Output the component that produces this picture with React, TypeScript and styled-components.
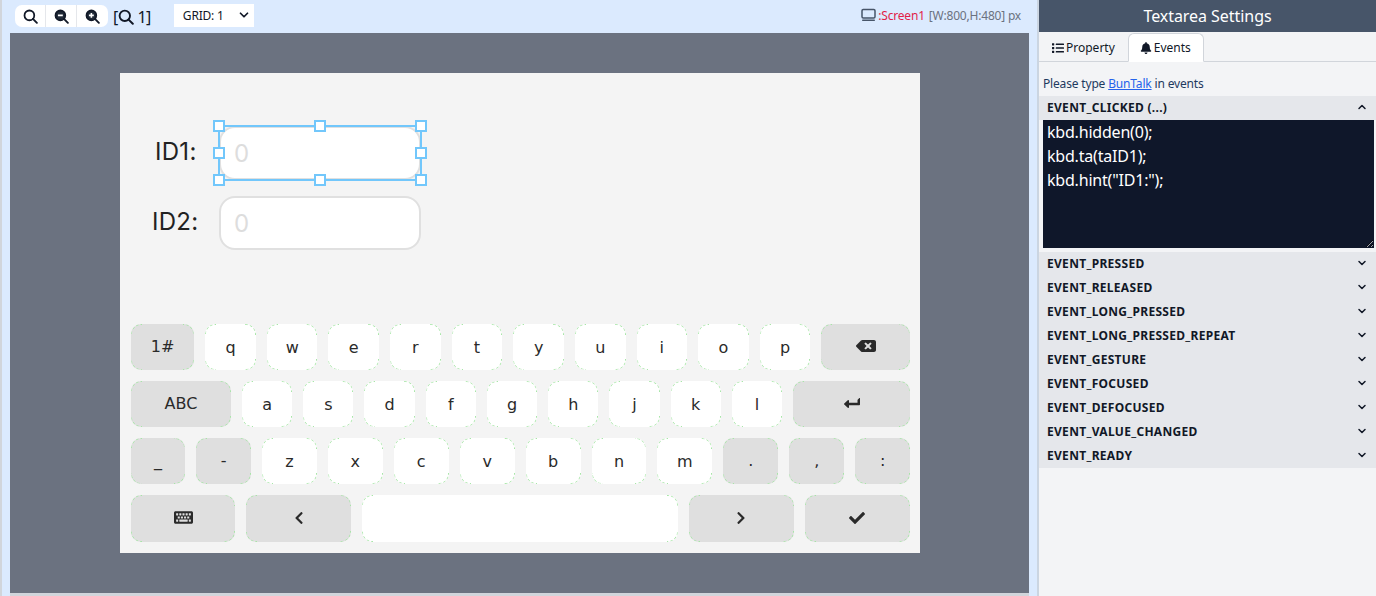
import styled, { createGlobalStyle } from 'styled-components';
import {
  FaBackspace,
  FaBell,
  FaCheck,
  FaChevronLeft,
  FaChevronRight,
  FaKeyboard,
  FaLevelDownAlt,
  FaList,
} from 'react-icons/fa';
import { ChevronDown, ChevronUp } from 'lucide-react';

const GlobalStyle = createGlobalStyle`
  html, body {
    margin: 0;
    padding: 0;
    height: 100%;
    overflow: hidden;
    font-family: "Noto Sans", "Open Sans", sans-serif;
  }
  * {
    box-sizing: border-box;
  }
`;

const Page = styled.div`
  display: flex;
  width: 1376px;
  height: 596px;
`;

const Editor = styled.div`
  flex: 0 0 1039px;
  display: flex;
  flex-direction: column;
  background: #dbeafe;
  border-left: 2px solid #d1d5db;
  border-right: 2px solid #cbd5e1;
  padding-left: 8px;
  padding-right: 8px;
`;

const Toolbar = styled.div`
  flex: 0 0 33px;
  display: flex;
  align-items: center;
  padding-left: 5px;
`;

const ZoomGroup = styled.div`
  display: flex;
  height: 22px;
  margin-top: -1px;
  background: #fff;
  border-radius: 7px;
  overflow: hidden;
`;

const ZoomButton = styled.button`
  width: 31px;
  padding: 0;
  border: 0;
  border-right: 1px solid #e5e7eb;
  background: transparent;
  display: flex;
  align-items: center;
  justify-content: center;
  &:last-child {
    border-right: 0;
  }
`;

const ZoomLevel = styled.div`
  margin-left: 5px;
  display: flex;
  align-items: center;
  font-size: 16px;
  letter-spacing: -0.5px;
  color: #111827;
  white-space: pre;
`;

const GridSelect = styled.div`
  margin-left: 23px;
  margin-top: -3px;
  width: 80px;
  height: 23px;
  padding: 0 3px 0 9px;
  background: #fff;
  display: flex;
  align-items: center;
  justify-content: space-between;
  font-size: 12px;
  letter-spacing: -0.2px;
  color: #111827;
`;

const ScreenInfo = styled.div`
  margin-left: auto;
  margin-right: 8px;
  margin-top: -3px;
  display: flex;
  align-items: center;
  font-size: 12px;
  letter-spacing: -0.2px;
  color: #6b7280;
`;

const ScreenName = styled.span`
  color: #e11d48;
  margin-left: 2px;
  margin-right: 4px;
`;

const Canvas = styled.div`
  flex: 1;
  background: #6b7280;
  padding: 40px 0 0 110px;
  border-bottom: 3px solid #d1d5db;
`;

const Screen = styled.div`
  position: relative;
  width: 800px;
  height: 480px;
  background: #f4f4f4;
  display: flex;
  flex-direction: column;
  justify-content: flex-end;
`;

const FieldLabel = styled.div<{ $x: number; $y: number }>`
  position: absolute;
  left: ${(p) => p.$x}px;
  top: ${(p) => p.$y}px;
  font-family: "Inter", sans-serif;
  font-size: 24px;
  line-height: 30px;
  letter-spacing: 0.3px;
  color: #222;
`;

const FieldBox = styled.div<{ $y: number }>`
  position: absolute;
  left: 99px;
  top: ${(p) => p.$y}px;
  width: 202px;
  height: 54px;
  background: #fff;
  border: 2px solid #e0e0e0;
  border-radius: 16px;
  padding-left: 13px;
  display: flex;
  align-items: center;
  font-family: "Inter", sans-serif;
  font-size: 24px;
  color: #ddd;
`;

const Selection = styled.div`
  position: absolute;
  left: 98px;
  top: 52px;
  width: 204px;
  height: 56px;
  border: 2px solid #72c7fb;
`;

const Handle = styled.div<{ $h: 'l' | 'c' | 'r'; $v: 't' | 'm' | 'b' }>`
  position: absolute;
  width: 12px;
  height: 12px;
  background: #fff;
  border: 2px solid #72c7fb;
  left: ${(p) => (p.$h === 'l' ? '-7px' : p.$h === 'c' ? 'calc(50% - 6px)' : 'calc(100% - 5px)')};
  top: ${(p) => (p.$v === 't' ? '-7px' : p.$v === 'm' ? 'calc(50% - 6px)' : 'calc(100% - 5px)')};
`;

const Keyboard = styled.div`
  height: 240px;
  padding: 11px 10px 11px 11px;
  display: flex;
  flex-direction: column;
  gap: 11px;
`;

const KeyRow = styled.div`
  flex: 0 0 46px;
  display: flex;
  gap: 11px;
  &:last-child {
    flex: 1;
  }
`;

const Key = styled.div<{ $grow: number; $mod?: boolean }>`
  position: relative;
  flex: ${(p) => p.$grow} 1 0;
  min-width: 0;
  display: flex;
  align-items: center;
  justify-content: center;
  padding-bottom: ${(p) => (p.$mod ? '2px' : '0')};
  background: ${(p) => (p.$mod ? '#dfdfdf' : '#fff')};
  border-radius: 10px;
  font-family: "DejaVu Sans", sans-serif;
  font-size: 16px;
  color: #2a2a2a;
  &::after {
    content: '';
    position: absolute;
    inset: 0;
    border: 1px dashed #a8e6a8;
    border-radius: 10px;
    -webkit-mask:
      linear-gradient(#000 0 0) top left / 11px 11px no-repeat,
      linear-gradient(#000 0 0) top right / 11px 11px no-repeat,
      linear-gradient(#000 0 0) bottom left / 11px 11px no-repeat,
      linear-gradient(#000 0 0) bottom right / 11px 11px no-repeat;
    mask:
      linear-gradient(#000 0 0) top left / 11px 11px no-repeat,
      linear-gradient(#000 0 0) top right / 11px 11px no-repeat,
      linear-gradient(#000 0 0) bottom left / 11px 11px no-repeat,
      linear-gradient(#000 0 0) bottom right / 11px 11px no-repeat;
  }
`;

const EnterIcon = styled(FaLevelDownAlt)`
  transform: rotate(90deg);
`;

const Panel = styled.div`
  flex: 1;
  display: flex;
  flex-direction: column;
  background: #f3f4f6;
`;

const PanelTitle = styled.div`
  flex: 0 0 32px;
  background: #475569;
  color: #fff;
  font-size: 16px;
  letter-spacing: -0.05px;
  display: flex;
  align-items: center;
  justify-content: center;
`;

const Tabs = styled.div`
  flex: 0 0 30px;
  display: flex;
  align-items: flex-end;
  padding-left: 1px;
  border-bottom: 1px solid #d1d5db;
`;

const Tab = styled.div<{ $active?: boolean }>`
  height: 29px;
  margin-bottom: -1px;
  padding: 0 12px 0 11px;
  display: flex;
  align-items: center;
  gap: 2px;
  font-size: 12px;
  color: #111827;
  border: 1px solid ${(p) => (p.$active ? '#d1d5db' : 'transparent')};
  border-bottom-color: ${(p) => (p.$active ? '#fff' : 'transparent')};
  border-radius: 6px 6px 0 0;
  background: ${(p) => (p.$active ? '#fff' : 'transparent')};
`;

const Hint = styled.div`
  height: 34px;
  padding: 13px 0 0 4px;
  font-size: 12px;
  line-height: 17px;
  letter-spacing: -0.17px;
  color: #1e3a5f;
  a {
    color: #2563eb;
    text-decoration: underline;
  }
`;

const EventRow = styled.div`
  height: 24px;
  padding: 0 8px 2px;
  background: #e5e7eb;
  display: flex;
  align-items: center;
  justify-content: space-between;
  font-size: 12px;
  font-weight: 700;
  letter-spacing: 0.3px;
  color: #111827;
`;

const CodeWrap = styled.div`
  padding: 0 2px 4px 4px;
  background: #f3f4f6;
`;

const Code = styled.textarea`
  display: block;
  width: 100%;
  height: 128px;
  padding: 0 4px;
  border: 0;
  border-radius: 0;
  outline: none;
  background: #0f172a;
  color: #fff;
  font-family: "Noto Sans", "Open Sans", sans-serif;
  font-size: 16px;
  line-height: 24px;
  letter-spacing: -0.2px;
`;

const handles: Array<['l' | 'c' | 'r', 't' | 'm' | 'b']> = [
  ['l', 't'],
  ['c', 't'],
  ['r', 't'],
  ['l', 'm'],
  ['r', 'm'],
  ['l', 'b'],
  ['c', 'b'],
  ['r', 'b'],
];

const events = [
  'EVENT_PRESSED',
  'EVENT_RELEASED',
  'EVENT_LONG_PRESSED',
  'EVENT_LONG_PRESSED_REPEAT',
  'EVENT_GESTURE',
  'EVENT_FOCUSED',
  'EVENT_DEFOCUSED',
  'EVENT_VALUE_CHANGED',
  'EVENT_READY',
];

const MonitorIcon = () => (
  <svg width="15" height="14" viewBox="0 0 15 14" fill="none">
    <rect x="1" y="1.5" width="13" height="8.5" rx="1.2" stroke="#475569" strokeWidth="1.5" />
    <rect x="1" y="11.5" width="13" height="1.5" rx="0.7" fill="#475569" />
  </svg>
);

// magnifier drawn by hand: the plain one is a ring, the +/- ones are filled
const Magnifier = ({ size = 15, sign }: { size?: number; sign?: '+' | '-' }) => (
  <svg width={size} height={size} viewBox="0 0 16 16" fill="none">
    <circle cx="6.8" cy="6.8" r="5.2" stroke="#111827" strokeWidth="1.9" fill={sign ? '#1f2937' : 'none'} />
    <line x1="10.6" y1="10.6" x2="14.8" y2="14.8" stroke="#111827" strokeWidth="2" strokeLinecap="round" />
    {sign && <line x1="4.2" y1="6.8" x2="9.4" y2="6.8" stroke="#fff" strokeWidth="1.7" />}
    {sign === '+' && <line x1="6.8" y1="4.2" x2="6.8" y2="9.4" stroke="#fff" strokeWidth="1.7" />}
  </svg>
);

const letterKeys = (letters: string, grow: number) =>
  letters.split('').map((l) => (
    <Key key={l} $grow={grow}>
      {l}
    </Key>
  ));

const code = 'kbd.hidden(0);\nkbd.ta(taID1);\nkbd.hint("ID1:");';

export default function App() {
  return (
    <Page>
      <GlobalStyle />
      <Editor>
        <Toolbar>
          <ZoomGroup>
            <ZoomButton>
              <Magnifier />
            </ZoomButton>
            <ZoomButton>
              <Magnifier sign="-" />
            </ZoomButton>
            <ZoomButton>
              <Magnifier sign="+" />
            </ZoomButton>
          </ZoomGroup>
          <ZoomLevel>
            [<Magnifier size={16} /> 1]
          </ZoomLevel>
          <GridSelect>
            GRID: 1
            <ChevronDown size={14} strokeWidth={3} />
          </GridSelect>
          <ScreenInfo>
            <MonitorIcon />
            <ScreenName>:Screen1</ScreenName>
            [W:800,H:480] px
          </ScreenInfo>
        </Toolbar>
        <Canvas>
          <Screen>
            <FieldLabel $x={35} $y={64}>ID1:</FieldLabel>
            <FieldBox $y={53}>0</FieldBox>
            <Selection>
              {handles.map(([h, v]) => (
                <Handle key={h + v} $h={h} $v={v} />
              ))}
            </Selection>
            <FieldLabel $x={32} $y={134}>ID2:</FieldLabel>
            <FieldBox $y={123}>0</FieldBox>
            <Keyboard>
              <KeyRow>
                <Key $grow={5} $mod>1#</Key>
                {letterKeys('qwertyuiop', 4)}
                <Key $grow={7} $mod>
                  <FaBackspace size={20} />
                </Key>
              </KeyRow>
              <KeyRow>
                <Key $grow={100} $mod>ABC</Key>
                {letterKeys('asdfghjkl', 50.2)}
                <Key $grow={117} $mod>
                  <EnterIcon size={16} />
                </Key>
              </KeyRow>
              <KeyRow>
                <Key $grow={0.985} $mod>_</Key>
                <Key $grow={1} $mod>-</Key>
                {letterKeys('zxcvbnm', 1)}
                <Key $grow={1} $mod>.</Key>
                <Key $grow={1} $mod>,</Key>
                <Key $grow={1} $mod>:</Key>
              </KeyRow>
              <KeyRow>
                <Key $grow={0.99} $mod>
                  <FaKeyboard size={19} />
                </Key>
                <Key $grow={1} $mod>
                  <FaChevronLeft size={14} />
                </Key>
                <Key $grow={3} />
                <Key $grow={1} $mod>
                  <FaChevronRight size={14} />
                </Key>
                <Key $grow={1} $mod>
                  <FaCheck size={16} />
                </Key>
              </KeyRow>
            </Keyboard>
          </Screen>
        </Canvas>
      </Editor>
      <Panel>
        <PanelTitle>Textarea Settings</PanelTitle>
        <Tabs>
          <Tab>
            <FaList size={12} /> Property
          </Tab>
          <Tab $active>
            <FaBell size={12} /> Events
          </Tab>
        </Tabs>
        <Hint>
          Please type <a href="#buntalk">BunTalk</a> in events
        </Hint>
        <EventRow>
          EVENT_CLICKED (...)
          <ChevronUp size={12} strokeWidth={3} />
        </EventRow>
        <CodeWrap>
          <Code defaultValue={code} spellCheck={false} />
        </CodeWrap>
        {events.map((e) => (
          <EventRow key={e}>
            {e}
            <ChevronDown size={12} strokeWidth={3} />
          </EventRow>
        ))}
      </Panel>
    </Page>
  );
}
